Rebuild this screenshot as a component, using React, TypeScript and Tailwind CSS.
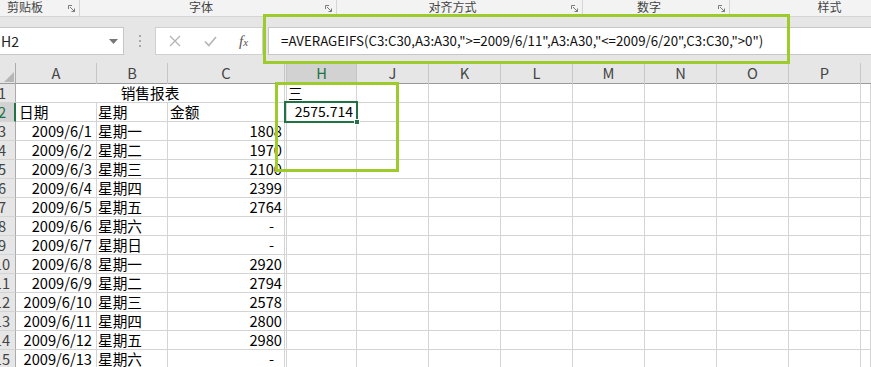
import React from 'react';

const COLS =
  'grid grid-cols-[16px_81px_71px_117px_2px_70px_72px_72px_72px_72px_72px_72px_72px_1fr]';

const LETTERS = ['J', 'K', 'L', 'M', 'N', 'O', 'P'];

interface RowData {
  n: number;
  date: string;
  day: string;
  amount: string;
}

const DATA: RowData[] = [
  { n: 3, date: '2009/6/1', day: '星期一', amount: '1808' },
  { n: 4, date: '2009/6/2', day: '星期二', amount: '1970' },
  { n: 5, date: '2009/6/3', day: '星期三', amount: '2100' },
  { n: 6, date: '2009/6/4', day: '星期四', amount: '2399' },
  { n: 7, date: '2009/6/5', day: '星期五', amount: '2764' },
  { n: 8, date: '2009/6/6', day: '星期六', amount: '-' },
  { n: 9, date: '2009/6/7', day: '星期日', amount: '-' },
  { n: 10, date: '2009/6/8', day: '星期一', amount: '2920' },
  { n: 11, date: '2009/6/9', day: '星期二', amount: '2794' },
  { n: 12, date: '2009/6/10', day: '星期三', amount: '2578' },
  { n: 13, date: '2009/6/11', day: '星期四', amount: '2800' },
  { n: 14, date: '2009/6/12', day: '星期五', amount: '2980' },
  { n: 15, date: '2009/6/13', day: '星期六', amount: '-' },
];

const cell = 'h-[19px] border-r border-b border-[#d4d4d4] leading-[17px] whitespace-nowrap overflow-hidden';

const Launcher = () => (
  <svg width="8" height="8" viewBox="0 0 8 8" className="shrink-0">
    <path d="M0.5 4V0.5H4" fill="none" stroke="#7a7a7a" strokeWidth="1" />
    <path d="M2 2L6.5 6.5M3.5 6.5H6.5V3.5" fill="none" stroke="#7a7a7a" strokeWidth="1" />
  </svg>
);

const RibbonGroup = ({ label, width, className = '' }: { label: string; width: string; className?: string }) => (
  <div className={`${width} ${className} h-full flex items-start border-r border-[#d5d5d5] shrink-0`}>
    <div className="flex-1 text-center leading-[14px] text-[12px] text-[#444]">{label}</div>
    <div className="w-[14px] flex justify-start pl-[3px] pt-[5px]">
      <Launcher />
    </div>
  </div>
);

const RowHeader = ({ n, active = false }: { n: number; active?: boolean }) => (
  <div
    className={`h-[19px] overflow-hidden border-b border-[#d4d4d4] ${
      active ? 'bg-[#d2d2d2] border-r-2 border-r-[#217346] text-[#217346]' : 'bg-[#e6e6e6] border-r border-r-[#ababab] text-[#444]'
    }`}
  >
    <div className="ml-[-11px] w-[26px] text-center leading-[18px]">{n}</div>
  </div>
);

const TailCells = () => (
  <>
    {LETTERS.map((l) => (
      <div key={l} className={cell} />
    ))}
    <div className={cell} />
  </>
);

export default function App() {
  return (
    <div
      className="relative w-[871px] h-[367px] overflow-hidden bg-white text-[14.67px] text-black"
      style={{ fontFamily: '"Noto Sans CJK SC", "Noto Sans", sans-serif' }}
    >
      {/* ribbon group labels */}
      <div className="h-[17px] bg-[#f3f3f3] border-b border-[#d5d5d5] flex overflow-hidden">
        <RibbonGroup label="剪贴板" width="w-[95px]" className="ml-[-15px]" />
        <RibbonGroup label="字体" width="w-[257px]" />
        <RibbonGroup label="对齐方式" width="w-[246px]" />
        <RibbonGroup label="数字" width="w-[147px]" />
        <div className="w-[199px] shrink-0 text-center leading-[14px] text-[12px] text-[#444]">样式</div>
      </div>

      {/* formula bar */}
      <div className="h-[46px] bg-[#e6e6e6] flex items-start pt-[10px]">
        <div className="w-[124px] h-[28px] bg-white border border-l-0 border-[#c6c6c6] flex items-center justify-between pr-[5px] shrink-0">
          <span className="pl-[1px] text-[14px] text-[#222]">H2</span>
          <svg width="9" height="5" viewBox="0 0 9 5">
            <path d="M0 0H9L4.5 5Z" fill="#777" />
          </svg>
        </div>
        <div className="w-[31px] h-[28px] flex flex-col items-center justify-center gap-[3px] shrink-0">
          <span className="w-[2px] h-[2px] bg-[#a8a8a8]" />
          <span className="w-[2px] h-[2px] bg-[#a8a8a8]" />
          <span className="w-[2px] h-[2px] bg-[#a8a8a8]" />
        </div>
        <div className="w-[108px] h-[28px] bg-white border border-[#d0d0d0] flex items-center shrink-0">
          <svg width="12" height="12" viewBox="0 0 12 12" className="ml-[13px]">
            <path d="M1 1L11 11M11 1L1 11" stroke="#b4b4b4" strokeWidth="1.3" fill="none" />
          </svg>
          <svg width="13" height="11" viewBox="0 0 13 11" className="ml-[23px]">
            <path d="M1 5.5L4.8 9.5L12 1" stroke="#b4b4b4" strokeWidth="1.6" fill="none" />
          </svg>
          <span
            className="ml-[22px] italic text-[15px] text-[#555]"
            style={{ fontFamily: '"Liberation Serif", serif' }}
          >
            f<span className="text-[11px]">x</span>
          </span>
        </div>
        <div className="ml-[5px] flex-1 h-[28px] bg-white border border-r-0 border-[#c6c6c6] flex items-center pl-[12px] whitespace-nowrap overflow-hidden text-[13.3px] text-[#111]">
          =AVERAGEIFS(C3:C30,A3:A30,"&gt;=2009/6/11",A3:A30,"&lt;=2009/6/20",C3:C30,"&gt;0")
        </div>
      </div>

      {/* column headers */}
      <div className={`${COLS} h-[21px] bg-[#e6e6e6] border-b border-[#9b9b9b] text-[#444] text-[14.67px]`}>
        <div className="border-r border-[#ababab] flex items-end justify-end pr-[1px] pb-[2px]">
          <svg width="10" height="10" viewBox="0 0 10 10">
            <path d="M10 0V10H0Z" fill="#b6b6b6" />
          </svg>
        </div>
        <div className="border-r border-[#c6c6c6] text-center leading-[20px]">A</div>
        <div className="border-r border-[#c6c6c6] text-center leading-[20px]">B</div>
        <div className="border-r border-[#c6c6c6] text-center leading-[20px]">C</div>
        <div className="border-r border-[#c6c6c6]" />
        <div className="bg-[#d2d2d2] border-r border-[#c6c6c6] border-b-2 border-b-[#217346] text-center leading-[19px] text-[#217346]">
          H
        </div>
        {LETTERS.map((l) => (
          <div key={l} className="border-r border-[#c6c6c6] text-center leading-[20px]">
            {l}
          </div>
        ))}
        <div />
      </div>

      {/* row 1 */}
      <div className={COLS}>
        <RowHeader n={1} />
        <div className={`${cell} col-span-3 text-center`}>销售报表</div>
        <div className={cell} />
        <div className={`${cell} pl-[1px]`}>三</div>
        <TailCells />
      </div>

      {/* row 2 */}
      <div className={COLS}>
        <RowHeader n={2} active />
        <div className={`${cell} pl-[3px]`}>日期</div>
        <div className={`${cell} pl-[1px]`}>星期</div>
        <div className={`${cell} pl-[2px]`}>金额</div>
        <div className={cell} />
        <div className={`${cell} relative overflow-visible text-right pr-[3px] text-[14px]`}>
          2575.714
          <div className="absolute top-[-2px] left-[-3px] right-[-2px] bottom-[-2px] border-2 border-[#217346]" />
          <div className="absolute right-[-4px] bottom-[-4px] w-[6px] h-[6px] bg-[#217346] border border-white" />
        </div>
        <TailCells />
      </div>

      {DATA.map((r) => (
        <div key={r.n} className={COLS}>
          <RowHeader n={r.n} />
          <div className={`${cell} text-right pr-[4px]`}>{r.date}</div>
          <div className={`${cell} pl-[1px]`}>{r.day}</div>
          <div className={`${cell} text-right ${r.amount === '-' ? 'pr-[10px]' : 'pr-[2px]'}`}>{r.amount}</div>
          <div className={cell} />
          <div className={cell} />
          <TailCells />
        </div>
      ))}

      {/* annotation boxes */}
      <div className="absolute left-[263px] top-[14px] w-[527px] h-[50px] border-[3px] border-[#9dcb2c]" />
      <div className="absolute left-[275px] top-[82px] w-[124px] h-[90px] border-[3px] border-[#9dcb2c]" />
    </div>
  );
}
